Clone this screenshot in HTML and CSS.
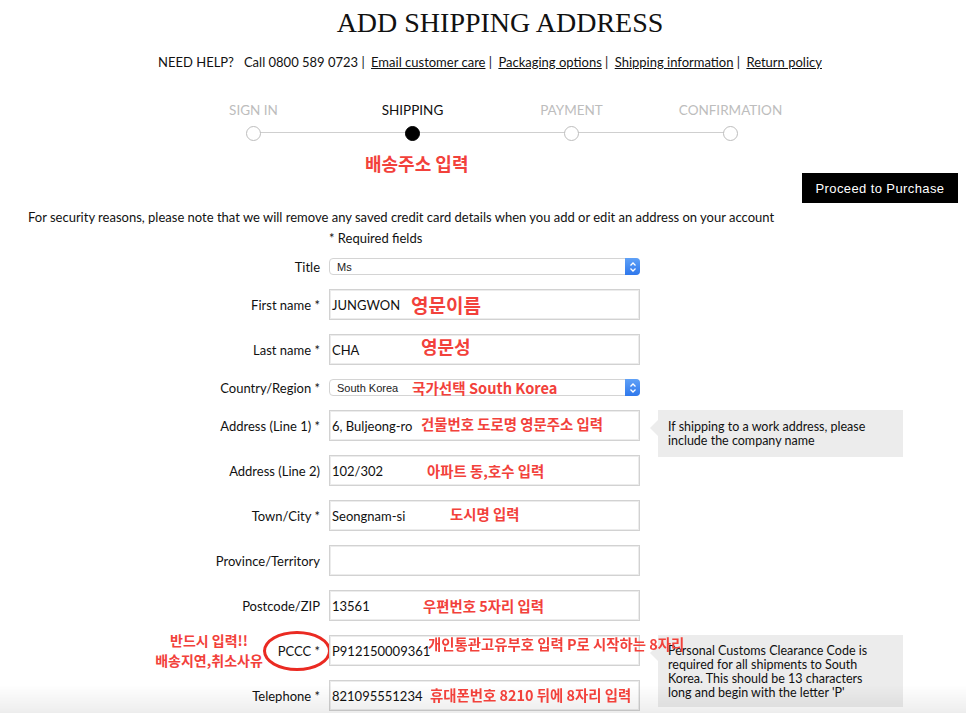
FILE: index.html
```html
<!DOCTYPE html>
<html lang="en">
<head>
    <meta charset="UTF-8">
    <meta name="viewport" content="width=device-width, initial-scale=1.0">
    <title>Add Shipping Address</title>
    <link rel="stylesheet" href="styles.css">
</head>
<body>

    <h1 class="page-title">ADD SHIPPING ADDRESS</h1>

    <div class="help-bar">
        <span>NEED HELP?&nbsp;&nbsp; Call 0800 589 0723 |</span>
        <a href="#">Email customer care</a> |
        <a href="#">Packaging options</a> |
        <a href="#">Shipping information</a> |
        <a href="#">Return policy</a>
    </div>

    <!-- Barra dei passi del checkout -->
    <div class="steps">
        <div class="step">
            <span class="step-label">SIGN IN</span>
            <span class="step-dot"></span>
        </div>
        <div class="step step-active">
            <span class="step-label">SHIPPING</span>
            <span class="step-dot"></span>
        </div>
        <div class="step">
            <span class="step-label">PAYMENT</span>
            <span class="step-dot"></span>
        </div>
        <div class="step">
            <span class="step-label">CONFIRMATION</span>
            <span class="step-dot"></span>
        </div>
    </div>

    <div class="note-step">배송주소 입력</div>

    <div class="proceed-area">
        <button class="proceed-btn">Proceed to Purchase</button>
    </div>

    <p class="security-text">For security reasons, please note that we will remove any saved credit card details when you add or edit an address on your account</p>

    <form class="address-form">
        <div class="form-row">
            <span></span>
            <span class="required-note">* Required fields</span>
        </div>

        <div class="form-row">
            <label>Title</label>
            <div class="select-box">
                <span>Ms</span>
                <span class="select-arrows">
                    <svg width="8" height="12" viewBox="0 0 8 12"><path d="M1.5 4.5 L4 2 L6.5 4.5 M1.5 7.5 L4 10 L6.5 7.5" fill="none" stroke="#fff" stroke-width="1.3"/></svg>
                </span>
            </div>
        </div>

        <div class="form-row">
            <label>First name *</label>
            <div class="field">JUNGWON<span class="note note-first">영문이름</span></div>
        </div>

        <div class="form-row">
            <label>Last name *</label>
            <div class="field">CHA<span class="note note-last">영문성</span></div>
        </div>

        <div class="form-row">
            <label>Country/Region *</label>
            <div class="select-box">
                <span>South Korea</span>
                <span class="note note-country">국가선택 South Korea</span>
                <span class="select-arrows">
                    <svg width="8" height="12" viewBox="0 0 8 12"><path d="M1.5 4.5 L4 2 L6.5 4.5 M1.5 7.5 L4 10 L6.5 7.5" fill="none" stroke="#fff" stroke-width="1.3"/></svg>
                </span>
            </div>
        </div>

        <div class="form-row">
            <label>Address (Line 1) *</label>
            <div class="field">6, Buljeong-ro<span class="note note-addr1">건물번호 도로명 영문주소 입력</span></div>
            <div class="tooltip tooltip-short">If shipping to a work address, please include the company name</div>
        </div>

        <div class="form-row">
            <label>Address (Line 2)</label>
            <div class="field">102/302<span class="note note-addr2">아파트 동,호수 입력</span></div>
        </div>

        <div class="form-row">
            <label>Town/City *</label>
            <div class="field">Seongnam-si<span class="note note-city">도시명 입력</span></div>
        </div>

        <div class="form-row">
            <label>Province/Territory</label>
            <div class="field"></div>
        </div>

        <div class="form-row">
            <label>Postcode/ZIP</label>
            <div class="field">13561<span class="note note-zip">우편번호 5자리 입력</span></div>
        </div>

        <div class="form-row">
            <div class="side-note">반드시 입력!!<br>배송지연,취소사유</div>
            <span class="circle-mark"></span>
            <label>PCCC *</label>
            <div class="field">P912150009361<span class="note note-pccc">개인통관고유부호 입력 P로 시작하는 8자리</span></div>
            <div class="tooltip tooltip-long">Personal Customs Clearance Code is required for all shipments to South Korea. This should be 13 characters long and begin with the letter 'P'</div>
        </div>

        <div class="form-row">
            <label>Telephone *</label>
            <div class="field">821095551234<span class="note note-phone">휴대폰번호 8210 뒤에 8자리 입력</span></div>
        </div>
    </form>

    <div class="bottom-fade"></div>
</body>
</html>
```

FILE: styles.css
```css
/* Base */
body {
    font-family: "Lato", "Noto Sans", sans-serif;
    font-size: 13px;
    color: #111;
    margin: 0;
    background-color: #fff;
}

.page-title {
    font-family: "Liberation Serif", "DejaVu Serif", serif;
    font-weight: normal;
    font-size: 28px;
    line-height: 32px;
    margin: 7px 0 0;
    padding-left: 34px;
    text-align: center;
}

/* Riga di aiuto */
.help-bar {
    margin-top: 14px;
    padding-left: 14px;
    text-align: center;
    line-height: 18px;
}
.help-bar a {
    color: #111;
    text-decoration: underline;
    margin-left: 3px;
}

/* Passi checkout */
.steps {
    display: flex;
    width: 636px;
    margin: 30px 0 0 174px;
    position: relative;
}
.steps::before {
    content: "";
    position: absolute;
    left: 80px;
    right: 80px;
    top: 31px;
    border-top: 1px solid #cfcfcf;
}
.step {
    flex: 1;
    display: flex;
    flex-direction: column;
    align-items: center;
    gap: 7px;
}
.step-label {
    color: #bdbdbd;
    line-height: 18px;
    font-size: 13.5px;
}
.step-dot {
    width: 13px;
    height: 13px;
    border: 1px solid #bdbdbd;
    border-radius: 50%;
    background-color: #fff;
    position: relative;
}
.step-active .step-label {
    color: #111;
}
.step-active .step-dot {
    background-color: #000;
    border-color: #000;
}

/* Annotazioni rosse */
.note-step,
.note,
.side-note {
    font-family: "Noto Sans CJK KR", "Liberation Sans", sans-serif;
    font-weight: bold;
    color: #f2413b;
}
.note-step {
    margin: 11px 0 0 365px;
    font-size: 18px;
    line-height: 22px;
}

.proceed-area {
    display: flex;
    justify-content: flex-end;
    padding-right: 8px;
}
.proceed-btn {
    font-family: "Liberation Sans", Arial, sans-serif;
    font-size: 13px;
    letter-spacing: 0.4px;
    color: #fff;
    background-color: #000;
    border: none;
    width: 156px;
    height: 30px;
    margin-top: -1px;
}

.security-text {
    margin: 5px 0 0 28px;
    line-height: 18px;
}

/* Form */
.address-form {
    display: flex;
    flex-direction: column;
    gap: 14px;
    margin-top: 3px;
}
.form-row {
    display: grid;
    grid-template-columns: 320px 311px;
    column-gap: 9px;
    align-items: center;
    position: relative;
}
.form-row label {
    text-align: right;
}
.required-note {
    line-height: 18px;
}
.address-form .form-row:first-child {
    margin-bottom: -3px;
}

.field {
    height: 31px;
    box-sizing: border-box;
    border: 1px solid #d2d2d2;
    box-shadow: inset 0 0 0 1px #ececec;
    padding: 0 2px;
    display: flex;
    align-items: center;
    position: relative;
}

.select-box {
    height: 17px;
    box-sizing: border-box;
    border: 1px solid #d4d4d4;
    border-radius: 4px;
    font-family: "Liberation Sans", Arial, sans-serif;
    font-size: 11px;
    color: #222;
    padding-left: 7px;
    display: flex;
    align-items: center;
    position: relative;
}
.select-arrows {
    position: absolute;
    right: -1px;
    top: -1px;
    width: 15px;
    height: 17px;
    border-radius: 0 4px 4px 0;
    background: linear-gradient(#5fa1f7, #2f78ec);
    display: flex;
    align-items: center;
    justify-content: center;
}

.note {
    position: absolute;
    white-space: nowrap;
    z-index: 2;
    font-size: 14.4px;
}
.note-first { left: 81px; top: 1px; font-size: 19px; }
.note-last { left: 91px; top: -2px; font-size: 18px; }
.note-country { left: 82px; top: -3px; font-size: 14.6px; }
.note-addr1 { left: 91px; top: 2px; }
.note-addr2 { left: 97px; top: 4px; }
.note-city { left: 120px; top: 2px; }
.note-zip { left: 93px; top: 4px; }
.note-pccc { left: 98px; top: -3px; }
.note-phone { left: 100px; top: 3px; }

.side-note {
    position: absolute;
    left: 150px;
    top: -5px;
    width: 118px;
    text-align: center;
    font-size: 14px;
    line-height: 20px;
}
.circle-mark {
    position: absolute;
    left: 263px;
    top: -4px;
    width: 62px;
    height: 34px;
    border: 3.5px solid #ea2a22;
    border-radius: 50%;
}

/* Tooltip */
.tooltip {
    position: absolute;
    left: 658px;
    top: 0;
    width: 245px;
    box-sizing: border-box;
    background-color: #ececec;
    line-height: 14px;
    font-size: 12.5px;
    color: #111;
}
.tooltip::before {
    content: "";
    position: absolute;
    left: -8px;
    top: 10px;
    border-style: solid;
    border-width: 8px 8px 8px 0;
    border-color: transparent #ececec transparent transparent;
}
.tooltip-short {
    padding: 10px 10px 9px;
}
.tooltip-long {
    padding: 9px 30px 10px 10px;
    height: 72px;
}

.bottom-fade {
    position: fixed;
    left: 0;
    right: 0;
    bottom: 0;
    height: 28px;
    background: linear-gradient(rgba(0, 0, 0, 0), rgba(0, 0, 0, 0.07));
    pointer-events: none;
}
```
